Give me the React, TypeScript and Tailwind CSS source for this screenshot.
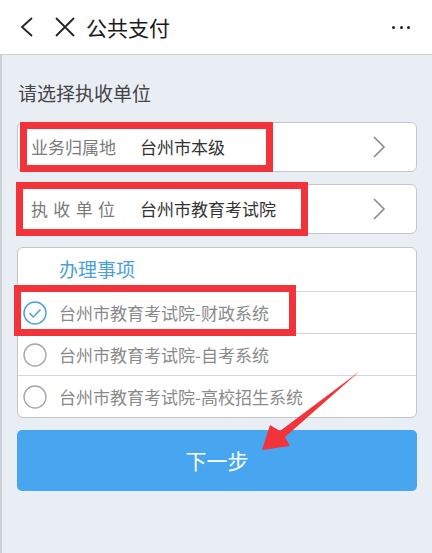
import React from 'react';

const font = { fontFamily: '"Noto Sans CJK SC", "Noto Sans", sans-serif' };

const Chevron: React.FC = () => (
  <svg width="16" height="24" viewBox="0 0 16 24" className="shrink-0">
    <path d="M3 2 L13 12 L3 22" fill="none" stroke="#8a8a8a" strokeWidth="1.6" />
  </svg>
);

const Radio: React.FC<{ checked?: boolean }> = ({ checked }) => (
  <svg width="24" height="24" viewBox="0 0 24 24" className="shrink-0">
    <circle cx="12" cy="12" r="11" fill="none" stroke={checked ? '#4a9fdc' : '#a8a8a8'} strokeWidth="1.4" />
    {checked && <path d="M6.5 12.3 L10.3 16 L17.5 8.5" fill="none" stroke="#4a9fdc" strokeWidth="1.5" />}
  </svg>
);

const options = [
  { label: '台州市教育考试院-财政系统', checked: true },
  { label: '台州市教育考试院-自考系统', checked: false },
  { label: '台州市教育考试院-高校招生系统', checked: false },
];

export default function App() {
  return (
    <div className="relative w-[432px] h-[553px] overflow-hidden bg-[#e9edf4]" style={font}>
      {/* top bar */}
      <div className="h-[55px] bg-white border-b border-[#cfcfcf] flex items-center pl-[19px] pr-[22px]">
        <svg width="16" height="22" viewBox="0 0 16 22">
          <path d="M13 2 L3 11 L13 20" fill="none" stroke="#222" strokeWidth="1.8" />
        </svg>
        <svg width="22" height="22" viewBox="0 0 22 22" className="ml-[19px]">
          <path d="M2 2 L20 20 M20 2 L2 20" fill="none" stroke="#222" strokeWidth="1.8" />
        </svg>
        <span className="ml-[10px] text-[21px] leading-none text-[#1a1a1a]">公共支付</span>
        <div className="ml-auto flex gap-[4.5px]">
          <span className="w-[3px] h-[3px] rounded-full bg-[#222]" />
          <span className="w-[3px] h-[3px] rounded-full bg-[#222]" />
          <span className="w-[3px] h-[3px] rounded-full bg-[#222]" />
        </div>
      </div>

      <div className="h-[498px] border-l-[2px] border-[#cdd0d6] pl-[15px] pr-[15px]">
        <div className="pt-[24px] h-[67px] pl-[1px] text-[19px] leading-[28px] text-[#444]">请选择执收单位</div>

        <div className="h-[50px] bg-white border border-[#c6c6c6] rounded-[6px] flex items-center pl-[13px] pr-[29px]">
          <span className="w-[109px] text-[17px] text-[#7a7a7a]">业务归属地</span>
          <span className="text-[17px] text-[#333]">台州市本级</span>
          <span className="ml-auto"><Chevron /></span>
        </div>

        <div className="mt-[12px] h-[50px] bg-white border border-[#c6c6c6] rounded-[6px] flex items-center pl-[13px] pr-[29px]">
          <span className="w-[84px] flex justify-between text-[17px] text-[#7a7a7a]">
            <span>执</span><span>收</span><span>单</span><span>位</span>
          </span>
          <span className="ml-[25px] text-[17px] text-[#333]">台州市教育考试院</span>
          <span className="ml-auto"><Chevron /></span>
        </div>

        <div className="mt-[13px] bg-white border border-[#c6c6c6] rounded-[6px]">
          <div className="h-[43px] flex items-center pl-[41px] text-[19px] text-[#4a9fdc]">办理事项</div>
          {options.map((o) => (
            <div key={o.label} className="h-[42px] border-t border-[#d6d6d6] flex items-center pl-[5px]">
              <Radio checked={o.checked} />
              <span className="ml-[12px] text-[17px] text-[#8a8a8a]">{o.label}</span>
            </div>
          ))}
        </div>

        <button className="mt-[12px] w-full h-[61px] rounded-[5px] bg-[#47a6ef] text-white text-[21px]">
          下一步
        </button>
      </div>

      {/* annotation boxes */}
      <div className="absolute left-[20px] top-[122px] w-[253px] h-[50px] border-[7px] border-[#f2333a]" />
      <div className="absolute left-[16px] top-[182px] w-[292px] h-[54px] border-[7px] border-[#f2333a]" />
      <div className="absolute left-[14px] top-[285px] w-[282px] h-[51px] border-[7px] border-[#f2333a]" />

      {/* annotation arrow */}
      <svg className="absolute left-0 top-0" width="432" height="553" viewBox="0 0 432 553">
        <polygon
          points="262,450 270,425 280,431 360,371 285,437 290,446"
          fill="#f2333a"
        />
      </svg>
    </div>
  );
}
